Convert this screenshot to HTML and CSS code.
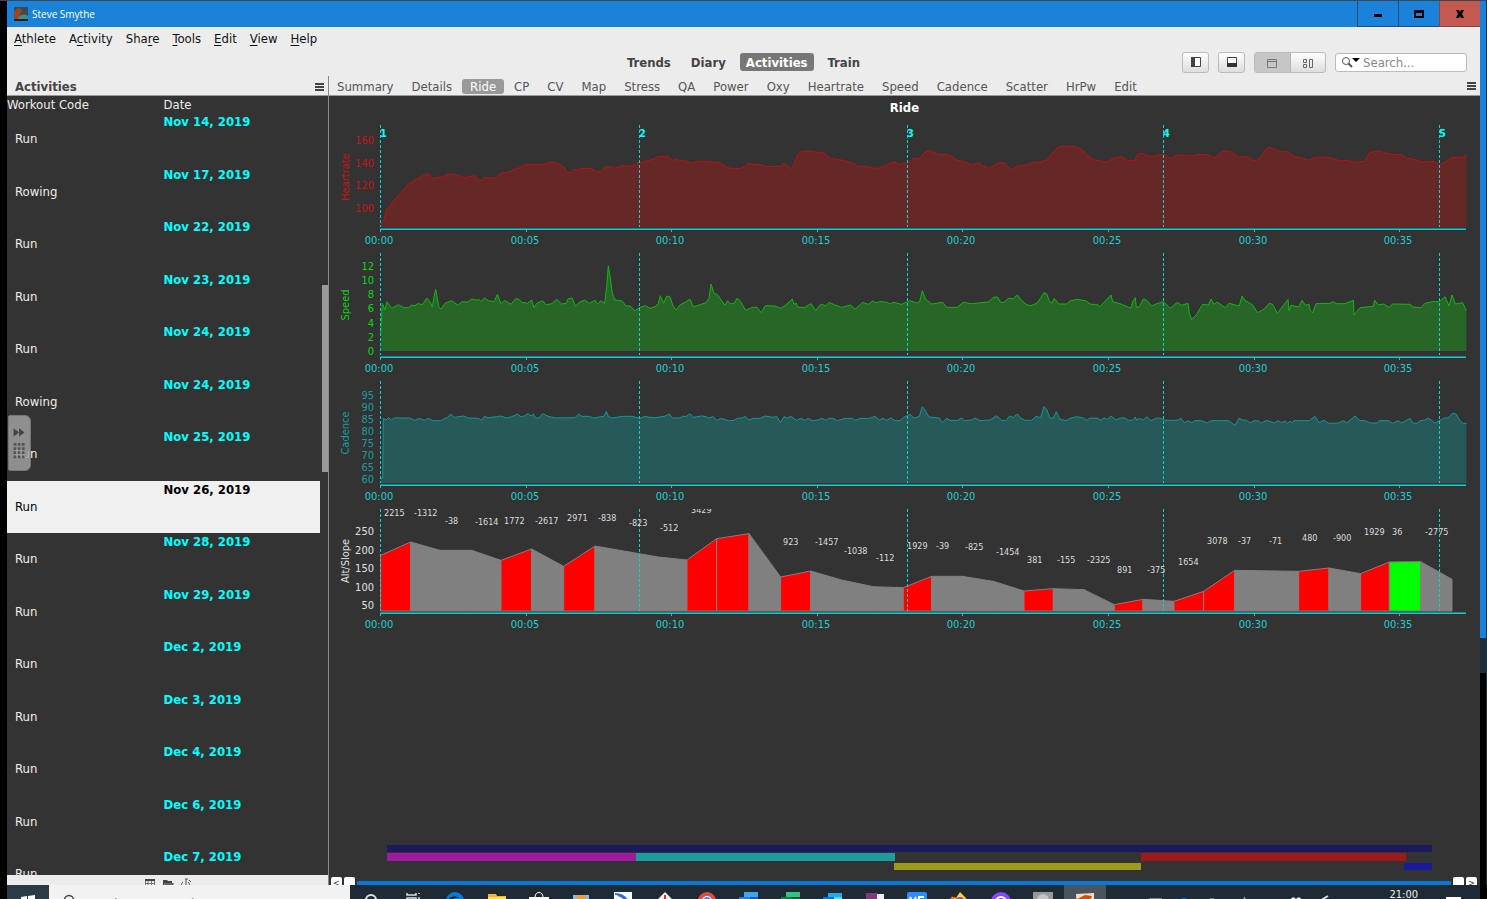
FILE: index.html
```html
<!DOCTYPE html>
<html lang="en">
<head>
<meta charset="utf-8">
<title>Steve Smythe</title>
<link rel="stylesheet" href="styles.css">
</head>
<body>
<div class="screen">
  <div class="desktop">
    <div class="window">
      <header class="titlebar">
        <svg class="app-icon" viewBox="0 0 14 14"><rect width="14" height="14" rx="1" fill="#3b4a4f"/><path d="M0 14V4L5 1l3 2-2 5-2 6z" fill="#a4441c"/><path d="M5 10c3-3 6-3 9-1v3H4z" fill="#3f8f8c"/><path d="M0 12h14v2H0z" fill="#222"/></svg>
        <h1 class="window-title">Steve Smythe</h1>
        <div class="window-controls">
          <button class="win-btn" aria-label="Minimize"><svg viewBox="0 0 12 10"><path d="M2 5h8v3H2z"/></svg></button>
          <button class="win-btn" aria-label="Maximize"><svg viewBox="0 0 12 10"><path fill-rule="evenodd" d="M1 1h10v8H1zM3 4v3h6V4z"/></svg></button>
          <button class="win-btn close" aria-label="Close"><svg viewBox="0 0 12 10"><path d="M2 1h3l1 2 1-2h3L8 5l2 4H7L6 7 5 9H2l2-4z"/></svg></button>
        </div>
      </header>
      <nav class="menubar" aria-label="Menu">
        <button><u>A</u>thlete</button><button>A<u>c</u>tivity</button><button>Sha<u>r</u>e</button><button><u>T</u>ools</button><button><u>E</u>dit</button><button><u>V</u>iew</button><button><u>H</u>elp</button>
      </nav>
      <div class="toolbar">
        <nav class="views" aria-label="Views">
          <button>Trends</button><button>Diary</button><button class="on">Activities</button><button>Train</button>
        </nav>
        <div class="tools">
          <button class="tool" aria-label="Toggle sidebar"><svg viewBox="0 0 12 12"><path d="M1.500 1.500h9v9h-9z" fill="#fff" stroke="#444"/><path d="M1 1h4v10H1z" fill="#444"/></svg></button>
          <button class="tool" aria-label="Toggle bottom panel"><svg viewBox="0 0 12 12"><path d="M1.500 1.500h9v9h-9z" fill="#fff" stroke="#444"/><path d="M1 7h10v4H1z" fill="#333"/></svg></button>
          <div class="segmented">
            <button class="on" aria-label="Tabbed view"><svg viewBox="0 0 12 12"><path d="M1.500 2.500h9v8h-9zM1 4.500h10" fill="none" stroke="#777"/></svg></button>
            <button aria-label="Tiled view"><svg viewBox="0 0 12 12"><path d="M1.500 2.500h3v3h-3zM1.500 7.500h3v3h-3zM7.500 2.500h3v8h-3z" fill="none" stroke="#666"/></svg></button>
          </div>
          <label class="search"><svg viewBox="0 0 20 12"><circle cx="5" cy="5" r="3.500" fill="none" stroke="#555"/><path d="M7.500 7.500 11 11" stroke="#555" stroke-width="2"/><path d="M11 2h8l-4 4z" fill="#000"/></svg><input type="text" placeholder="Search..." aria-label="Search"></label>
        </div>
      </div>
      <div class="split">
        <aside class="sidebar">
          <div class="side-head"><h2>Activities</h2><button class="burger" aria-label="Sidebar menu"></button></div>
          <div class="list">
            <table class="activities">
              <thead><tr><th>Workout Code</th><th>Date</th></tr></thead>
              <tbody>
                <tr><td>Run</td><td>Nov 14, 2019</td></tr>
                <tr><td>Rowing</td><td>Nov 17, 2019</td></tr>
                <tr><td>Run</td><td>Nov 22, 2019</td></tr>
                <tr><td>Run</td><td>Nov 23, 2019</td></tr>
                <tr><td>Run</td><td>Nov 24, 2019</td></tr>
                <tr><td>Rowing</td><td>Nov 24, 2019</td></tr>
                <tr><td>Run</td><td>Nov 25, 2019</td></tr>
                <tr class="selected"><td>Run</td><td>Nov 26, 2019</td></tr>
                <tr><td>Run</td><td>Nov 28, 2019</td></tr>
                <tr><td>Run</td><td>Nov 29, 2019</td></tr>
                <tr><td>Run</td><td>Dec 2, 2019</td></tr>
                <tr><td>Run</td><td>Dec 3, 2019</td></tr>
                <tr><td>Run</td><td>Dec 4, 2019</td></tr>
                <tr><td>Run</td><td>Dec 6, 2019</td></tr>
                <tr><td>Run</td><td>Dec 7, 2019</td></tr>
              </tbody>
            </table>
            <div class="scroll-thumb"></div>
            <button class="drawer" aria-label="Open drawer"><svg viewBox="0 0 24 56"><path d="M5 12l6 4.500L5 21zM11 12l6 4.500-6 4.500z" fill="#444"/><g fill="#555"><path d="M5 28h3v3H5zM9.500 28h3v3h-3zM14 28h3v3h-3zM5 32.500h3v3H5zM9.500 32.500h3v3h-3zM14 32.500h3v3h-3zM5 37h3v3H5zM9.500 37h3v3h-3zM14 37h3v3h-3zM5 41.500h3v3H5zM9.500 41.500h3v3h-3zM14 41.500h3v3h-3z"/></g></svg></button>
          </div>
          <div class="side-foot">
            <button aria-label="Calendar"><svg viewBox="0 0 12 12"><path d="M1 1h10v2H1z" fill="#444"/><path d="M1.500 3v8h9V3M1 5.500h10M1 8h10M4 3v8M7.500 3v8" fill="none" stroke="#777"/></svg></button>
            <button aria-label="Folder"><svg viewBox="0 0 12 12"><path d="M1 2h4l1 1h4v2H3L1 9z" fill="#444"/><path d="M3 5h9l-2 6H1z" fill="#666"/></svg></button>
            <button aria-label="Intervals"><svg viewBox="0 0 12 12"><path d="M3 4a4 4 0 1 0 5 0M5 1h3M6 1v6M9 2l2 2" fill="none" stroke="#555"/></svg></button>
          </div>
        </aside>
        <main class="main">
          <div class="tabs-row">
            <nav class="tabs" aria-label="Charts">
              <button>Summary</button><button>Details</button><button class="on">Ride</button><button>CP</button><button>CV</button><button>Map</button><button>Stress</button><button>QA</button><button>Power</button><button>Oxy</button><button>Heartrate</button><button>Speed</button><button>Cadence</button><button>Scatter</button><button>HrPw</button><button>Edit</button>
            </nav>
            <button class="burger" aria-label="Chart menu"></button>
          </div>
          <section class="charts">
            <h2>Ride</h2>
            <svg class="chart" id="heartrate" viewBox="0 0 1151 128"></svg>
            <svg class="chart" id="speed" viewBox="0 0 1151 128"></svg>
            <svg class="chart" id="cadence" viewBox="0 0 1151 128"></svg>
            <svg class="chart" id="altitude" viewBox="0 0 1151 128"></svg>
            <svg class="intervals" viewBox="0 0 1151 28">
              <rect x="58" y="0" width="1045" height="7" fill="#1a1a5c"/>
              <rect x="58" y="8" width="250" height="8" fill="#a01a9e"/>
              <rect x="307" y="8" width="259" height="8" fill="#1c9c9a"/>
              <rect x="812" y="8" width="265" height="8" fill="#9c1a1a"/>
              <rect x="565" y="18" width="247" height="7" fill="#9c9a1a"/>
              <rect x="1075" y="18" width="28" height="7" fill="#1a1a9c"/>
            </svg>
            <div class="span-slider">
              <button aria-label="Scroll left">&lt;</button><button aria-label="Span start"></button><div class="span-line"></div><button aria-label="Span end"></button><button aria-label="Scroll right">&gt;</button>
            </div>
          </section>
        </main>
      </div>
    </div>
    <div class="edge"><div class="edge-blue"></div><div class="edge-teal"></div></div>
  </div>
  <footer class="taskbar">
    <button class="start" aria-label="Start"><svg viewBox="0 0 16 16"><path d="M1 3l6-1v6H1zM8 2l7-1v7H8zM1 9h6v6l-6-1zM8 9h7v7l-7-1z" fill="#fff"/></svg></button>
    <label class="task-search"><svg viewBox="0 0 14 14"><circle cx="7" cy="6" r="4.500" fill="none" stroke="#444" stroke-width="1.500"/></svg><input type="text" placeholder="Type here to search" aria-label="Type here to search"></label>
    <div class="apps">
      <button aria-label="Cortana"><svg viewBox="0 0 20 16"><circle cx="10" cy="8" r="5" fill="none" stroke="#ddd" stroke-width="2"/></svg></button>
      <button aria-label="Task view"><svg viewBox="0 0 20 16"><path d="M4 1v2h9V1M4 6h9v8H4zM16 1v1M16 5v8" fill="none" stroke="#ddd" stroke-width="1.500"/></svg></button>
      <button aria-label="Edge"><svg viewBox="0 0 20 16"><path d="M1 9a9 9 0 0 1 18 0v1H7c0-5 7-5 8-3-3-4-10-4-12 2z" fill="#0a78d6"/></svg></button>
      <button aria-label="Files"><svg viewBox="0 0 20 16"><path d="M1 2h8l1 2h9v12H1z" fill="#f4b92a"/><path d="M1 5h18v11H1z" fill="#ffd969"/></svg></button>
      <button aria-label="Store"><svg viewBox="0 0 20 16"><path d="M0 5h20v11H0z" fill="#fff"/><path d="M6 5c0-6 8-6 8 0" fill="none" stroke="#fff"/></svg></button>
      <button aria-label="Photos"><svg viewBox="0 0 20 16"><path d="M2 3h16v13H2z" fill="#8db9d4"/><circle cx="10" cy="8" r="5" fill="#f29a38"/></svg></button>
      <button aria-label="Editor"><svg viewBox="0 0 20 16"><path d="M1 0h18v16H1z" fill="#f4f8ff"/><path d="M2 2q8 0 12 6M5 3q7 2 9 8" stroke="#3566d8" stroke-width="2" fill="none"/></svg></button>
      <button aria-label="Garmin"><svg viewBox="0 0 20 16"><path d="M10 0l9 9-9 9-9-9z" fill="#eee"/><path d="M9 3h2v6H9z" fill="#c33"/></svg></button>
      <button aria-label="Chrome"><svg viewBox="0 0 20 16"><circle cx="10" cy="9" r="9" fill="#dc4e41"/><circle cx="10" cy="9" r="5" fill="#fff"/><circle cx="10" cy="9" r="4" fill="#4285f4"/></svg></button>
      <button aria-label="Word"><svg viewBox="0 0 20 16"><path d="M5 0h14v5H5z" fill="#41a5ee"/><path d="M5 5h14v11H5z" fill="#185abd"/><path d="M0 5h11v11H0z" fill="#2b7cd3"/></svg></button>
      <button aria-label="Excel"><svg viewBox="0 0 20 16"><path d="M5 0h14v5H5z" fill="#33c481"/><path d="M5 5h14v11H5z" fill="#185c37"/><path d="M0 5h11v11H0z" fill="#107c41"/></svg></button>
      <button aria-label="Outlook"><svg viewBox="0 0 20 16"><path d="M5 1h14v5H5z" fill="#28a8ea"/><path d="M5 5h14v11H5z" fill="#50d9ff"/><path d="M0 5h11v11H0z" fill="#0078d4"/></svg></button>
      <button aria-label="OneNote"><svg viewBox="0 0 20 16"><path d="M9 2h10v14H9z" fill="#eee"/><path d="M1 1h11v15H1z" fill="#80397b"/></svg></button>
      <button aria-label="VSDC"><svg viewBox="0 0 20 16"><rect width="20" height="20" rx="2" fill="#2a8cff"/><path d="M3 5l3 6 3-6M17 5h-5v4h5" fill="none" stroke="#fff" stroke-width="2"/></svg></button>
      <button aria-label="Firefox"><svg viewBox="0 0 20 16"><path d="M1 7l3-2 3 1 4-6 5 5 3 4v8H1z" fill="#ffcf33"/><path d="M1 8l2-4 3 3 4-1v10H1z" fill="#f36b21"/><circle cx="11" cy="10" r="5" fill="#8c45d0"/></svg></button>
      <button aria-label="Podcasts"><svg viewBox="0 0 20 16"><circle cx="10" cy="10" r="10" fill="#8746ff"/><circle cx="10" cy="10" r="5" fill="none" stroke="#fff" stroke-width="2"/></svg></button>
      <button aria-label="Disc"><svg viewBox="0 0 20 16"><path d="M0 0h20v16H0z" fill="#999"/><circle cx="10" cy="8" r="6" fill="#c4c4c4"/></svg></button>
      <button class="on" aria-label="GoldenCheetah"><svg viewBox="0 0 20 16"><path d="M1 2l18-1v15H2z" fill="#f3dcc4"/><path d="M2 7l8-4 7 1-4 9H3z" fill="#c4521a"/></svg></button>
    </div>
    <div class="tray">
      <svg viewBox="0 0 16 16"><path d="M1 5h13v9H1zM4 7v7" fill="none" stroke="#ddd"/></svg>
      <svg viewBox="0 0 16 16"><circle cx="8" cy="9" r="5" fill="#0a78d6"/></svg>
      <svg viewBox="0 0 16 16"><circle cx="8" cy="9" r="5" fill="#7d878c"/></svg>
      <svg viewBox="0 0 16 16"><path d="M2 6h3v6H2zM9 5q3 3 0 8M12 3q4 5 0 10" fill="none" stroke="#ddd"/></svg>
      <svg viewBox="0 0 16 16"><circle cx="8" cy="9" r="4" fill="#ccc"/></svg>
      <svg viewBox="0 0 16 16"><path d="M2 6q3-5 6-1 3-4 6 1l-6 8z" fill="#eee"/></svg>
      <svg viewBox="0 0 16 16"><path d="M7 14V5l5-3" fill="none" stroke="#ddd" stroke-width="2"/></svg>
      <span class="lang">ENG</span>
      <time>21:00</time>
      <svg viewBox="0 0 16 16"><path d="M1 4h13v12H1z" fill="none" stroke="#fff" stroke-width="2"/></svg>
    </div>
  </footer>
</div>
<script src="charts.js"></script>
</body>
</html>
```
FILE: styles.css
```css
* { box-sizing: border-box; }
body {
  margin: 0;
  background: #000;
  font-family: "DejaVu Sans Condensed", "Noto Sans", sans-serif;
  font-size: 13px;
}
button {
  border: 0;
  padding: 0;
  margin: 0;
  background: none;
  font: inherit;
  color: inherit;
}
input { border: 0; padding: 0; background: none; font: inherit; min-width: 0; }
h1, h2 { margin: 0; font-size: 13px; }
.screen {
  height: 100vh;
  display: flex;
  flex-direction: column;
  overflow: hidden;
  padding-left: 7px;
  border-top: 1px solid #3c4650;
}
.desktop { flex: 1; min-height: 0; display: flex; }
.window { flex: 1; min-width: 0; display: flex; flex-direction: column; background: #ececec; }
.edge { width: 7px; display: flex; flex-direction: column; border-right: 1px solid #26303a; }
.edge-blue { flex: 637; background: #1a82d8; }
.edge-teal { flex: 35; background: #1d3039; margin-bottom: 212px; }

.titlebar { height: 26px; display: flex; align-items: center; gap: 4px; padding-left: 7px; background: #1a82d8; }
.app-icon { width: 14px; height: 14px; }
.window-title { flex: 1; color: #fff; font: 10px "Open Sans", "Noto Sans", sans-serif; }
.window-controls { display: flex; align-self: stretch; }
.win-btn {
  width: 41px;
  display: flex;
  align-items: center;
  justify-content: center;
  border: solid #24506f;
  border-width: 0 0 1px 1px;
}
.win-btn svg { width: 12px; height: 10px; }
.close { background: #c4594f; border-color: #7c4a4c; }

.menubar { height: 23px; display: flex; align-items: center; gap: 13px; padding-left: 7px; color: #111; }
.menubar u { text-underline-offset: 2px; }

.toolbar { height: 26px; display: grid; grid-template-columns: 1fr auto 1fr; align-items: center; padding-bottom: 2px; }
.views { grid-column: 2; display: flex; gap: 8px; font-weight: bold; color: #444; }
.views button { padding: 0 6px; height: 18px; border-radius: 3px; }
.views .on { background: #777; color: #fff; }
.tools { display: flex; justify-content: flex-end; align-items: center; gap: 9px; padding-right: 13px; }
.tool, .segmented {
  height: 21px;
  border: 1px solid #bbb;
  border-radius: 3px;
  background: linear-gradient(#fdfdfd, #dedede);
}
.tool { width: 27px; display: flex; align-items: center; justify-content: center; }
.tools .tool svg, .segmented svg { width: 12px; height: 12px; }
.segmented { display: flex; width: 72px; }
.segmented button { flex: 1; display: flex; align-items: center; justify-content: center; padding-top: 2px; }
.segmented .on { background: #c6c6c6; border-right: 1px solid #b4b4b4; }
.search {
  width: 132px;
  height: 19px;
  display: flex;
  align-items: center;
  padding-left: 5px;
  gap: 2px;
  background: #fff;
  border: 1px solid #bbb;
  border-radius: 3px;
}
.search svg { width: 20px; height: 12px; flex: none; }
.search input { flex: 1; }
.search input::placeholder { color: #888; opacity: 1; }

.split { flex: 1; min-height: 0; display: flex; }
.sidebar { width: 322px; display: flex; flex-direction: column; border-right: 1px solid #888; }
.side-head, .tabs-row {
  height: 20px;
  flex: none;
  display: flex;
  align-items: center;
  justify-content: space-between;
  border-bottom: 1px solid #999;
}
.side-head { padding: 2px 4px 0 8px; }
.side-head h2 { color: #444; }
.burger { width: 9px; height: 8px; border: solid #444; border-width: 2px 0; background: linear-gradient(#444, #444) 0 1px / 100% 2px no-repeat; }
.list { flex: 1; min-height: 0; position: relative; overflow: hidden; background: #333; }
.activities { width: 313px; border-collapse: collapse; table-layout: fixed; color: #eee; }
.activities th { height: 17px; padding: 0; text-align: left; font-weight: normal; line-height: 17px; }
.activities td { height: 53px; padding: 0; vertical-align: top; line-height: 17px; color: #0ff; font-weight: bold; }
.activities tr:nth-child(even) td { height: 52px; }
.activities td:first-child { padding: 17px 0 0 8px; font-weight: normal; color: #eee; }
.activities .selected { background: #f0f0f0; }
.activities .selected td, .activities .selected td:first-child { color: #000; }
.scroll-thumb { position: absolute; right: 0; top: 189px; width: 6px; height: 187px; background: #999; }
.drawer {
  position: absolute;
  left: 1px;
  top: 319px;
  width: 23px;
  height: 56px;
  border: 1px solid #777;
  border-radius: 2px 6px 6px 2px;
  background: rgba(160, 160, 160, .85);
}
.drawer svg { width: 22px; height: 54px; display: block; }
.side-foot { height: 10px; flex: none; display: flex; align-items: flex-start; gap: 6px; justify-content: center; overflow: hidden; padding-top: 3px; }
.side-foot svg { width: 12px; height: 12px; display: block; }

.main { flex: 1; min-width: 0; display: flex; flex-direction: column; }
.tabs-row { padding: 1px 4px 0 0; }
.tabs { display: flex; gap: 2px; color: #555; }
.tabs button { padding: 0 8px; height: 15px; line-height: 15px; border-radius: 3px; }
.tabs .on { background: #999; color: #fff; }
.charts { flex: 1; min-height: 0; display: flex; flex-direction: column; background: #333; }
.charts h2 { height: 24px; line-height: 24px; text-align: center; color: #fff; }
.chart { display: block; width: 100%; }
.chart text { font-size: 11px; }
.chart .slope { font-size: 9px; fill: #ddd; }
.chart .lap { font-weight: bold; fill: #0ff; }
.chart .time { fill: #1cd0d0; text-anchor: middle; }
.chart .tick { text-anchor: end; }
.chart .name { text-anchor: middle; }
.intervals { display: block; width: 100%; margin-top: auto; }
.span-slider { height: 12px; flex: none; display: flex; align-items: flex-end; gap: 2px; padding: 0 3px 0 2px; overflow: hidden; }
.span-slider button { width: 11px; height: 8px; overflow: hidden; border-radius: 2px 2px 0 0; background: #fff; color: #333; font-size: 9px; line-height: 12px; }
.span-line { flex: 1; height: 4px; background: #0a78d6; }

.taskbar { height: 14px; flex: none; display: flex; align-items: flex-start; overflow: hidden; background: #1f2b34; margin-right: 7px; }
.start { width: 42px; padding: 9px 0 0 13px; background: #2b3b45; }
.start svg { width: 16px; height: 16px; display: block; }
.task-search { width: 301px; height: 40px; display: flex; gap: 8px; align-items: flex-start; padding: 9px 0 0 13px; background: #f2f2f2; }
.task-search svg { width: 14px; height: 14px; }
.task-search input { flex: 1; padding-top: 2px; }
.apps { display: flex; }
.apps button { width: 42px; height: 40px; display: flex; align-items: flex-start; justify-content: center; padding-top: 7px; }
.apps svg { width: 20px; height: 16px; display: block; }
.apps .on { background: #4a545c; }
.tray { margin-left: auto; display: flex; gap: 12px; padding: 9px 18px 0 0; color: #eee; font-size: 11px; line-height: 20px; }
.tray svg { width: 16px; height: 16px; }
.tray time { line-height: 11px; margin-top: -5px; padding: 0 16px 0 12px; }
.tray .lang { height: 20px; }
```
FILE: charts.js
```js
// Samples are x,y pairs in thirds of a pixel, grouped in three runs,
// each with its own x origin.
const ORIGINS = [3, 1203, 2313];
const TIMES = ['00:00', '00:05', '00:10', '00:15', '00:20', '00:25', '00:30', '00:35'];
const LAPS = [51, 310, 578, 834, 1110];

const heart = [
  '152,312 160,305 170,268 180,260 190,243 210,220 235,192 265,174 290,162 297,162 308,175 340,170 355,162 375,163 388,168 405,173 435,167 445,180 455,182 463,171 475,174 495,174 512,160 535,157 548,149 570,143 583,134 640,134 655,126 680,128 702,142 712,157 722,157 735,148 745,150 755,145 785,146 800,156 812,155 825,140 840,140 855,145 870,139 885,137 908,139 918,128 940,126 970,118 985,109 1015,109 1030,122 1040,117 1050,122 1070,123 1085,130 1105,123 1170,128 1185,139',
  '0,145 30,146 42,141 56,129 70,133 92,134 105,140 150,139 162,130 172,137 184,148 195,125 205,102 212,96 235,92 268,99 280,96 293,109 305,116 325,118 365,128 385,140 415,140 430,145 450,144 470,134 488,126 500,129 508,133 520,129 535,129 550,116 570,115 582,99 595,92 625,102 658,105 680,120 695,123 725,134 745,129 760,138 778,144 790,138 805,129 825,129 840,147 850,148 862,138 882,137 905,128 932,125 950,121 965,101 988,79 1035,79 1058,91 1078,111 1098,121',
  '0,121 12,127 25,124 40,114 68,111 82,123 105,121 110,107 120,100 130,101 140,108 155,109 168,109 178,103 192,103 212,116 232,105 255,107 265,105 275,109 290,104 325,104 335,112 347,112 358,100 372,92 392,95 415,111 445,111 458,121 472,121 485,107 500,85 510,82 540,95 565,96 582,110 600,112 628,121 645,112 660,111 698,114 718,123 740,121 765,127 790,124 800,116 808,98 835,93 850,98 880,103 905,104 920,115 940,117 965,126 1000,124 1018,134 1035,127 1055,113 1075,112 1090,112 1099,102'
];
const speed = [
  '152,640 157,550 165,570 171,545 185,565 205,554 222,563 235,563 245,555 255,557 265,550 277,555 290,534 300,545 307,560 317,508 327,563 333,567 345,550 365,542 384,556 395,545 412,546 427,537 440,541 447,538 453,545 463,534 475,542 492,545 502,523 513,551 523,541 543,553 557,536 567,538 575,547 592,550 605,540 612,563 620,550 638,542 648,555 665,551 680,538 695,552 708,550 715,536 727,534 736,559 748,547 764,540 778,550 795,541 803,553 812,542 824,550 830,500 835,437 841,475 847,520 855,540 877,543 887,558 900,558 915,572 930,562 947,557 960,565 978,559 985,550 991,527 1001,550 1010,528 1020,531 1028,555 1038,570 1050,555 1080,538 1090,560 1108,555 1128,548 1137,535 1143,492 1152,520 1162,524 1185,556 1193,542',
  '0,551 12,551 22,534 32,545 47,571 65,563 80,561 94,578 106,557 135,558 152,565 165,557 187,537 192,553 198,549 204,562 225,562 243,551 257,572 272,553 288,557 297,547 315,555 335,562 362,555 375,568 398,547 415,553 428,543 438,549 450,545 472,547 480,552 492,547 515,553 540,542 560,549 569,545 577,512 587,538 605,552 638,547 650,562 682,562 700,547 725,551 775,546 790,532 803,531 812,547 822,547 835,535 850,536 862,525 873,540 890,554 903,557 922,549 942,518 950,521 958,544 966,549 972,535 987,552 1010,552 1020,543 1040,538 1070,543 1080,552 1105,555',
  '0,560 33,525 38,545 60,551 93,565 98,545 106,533 109,562 118,560 130,537 140,541 155,558 170,551 190,545 210,565 232,547 245,556 264,550 268,580 275,599 290,583 308,553 325,555 333,537 342,553 352,546 375,563 387,550 418,558 426,528 435,541 458,555 472,578 492,568 508,550 518,553 532,580 564,538 567,572 573,556 596,561 606,541 616,556 627,553 631,572 638,579 648,551 690,550 698,545 710,551 735,551 760,541 762,585 780,563 820,559 824,541 835,555 850,552 867,562 878,552 930,553 940,561 962,563 975,550 998,545 1018,545 1035,530 1047,558 1056,525 1066,552 1088,548 1099,572'
];
const cadence = [
  '152,326 158,325 160,145 168,150 175,143 184,150 193,144 240,144 253,151 268,145 283,151 295,145 308,152 332,152 345,145 352,143 362,132 373,142 400,138 415,144 445,145 455,151 463,139 475,143 500,140 512,138 530,144 545,140 563,132 572,140 583,138 594,131 603,138 610,132 617,144 627,144 638,131 655,139 675,144 735,143 746,132 756,139 778,139 790,144 822,139 829,124 835,139 845,144 880,139 905,139 930,145 945,139 960,142 975,143 1003,139 1018,132 1028,144 1050,144 1058,139 1070,139 1080,131 1090,142 1115,138 1128,140 1135,144 1150,140 1160,151 1175,145 1195,152',
  '0,152 12,151 22,145 38,144 45,139 57,150 70,145 90,145 105,138 130,142 140,139 151,158 162,140 172,144 182,139 200,151 212,145 225,151 235,145 247,152 263,150 275,145 288,151 295,145 310,145 322,152 345,145 367,145 377,151 390,145 418,145 435,139 448,150 460,145 470,151 482,144 495,152 510,152 520,143 540,133 552,144 568,139 577,110 585,120 597,141 628,144 637,158 650,145 660,151 683,151 695,144 703,152 725,150 735,144 750,152 780,150 800,137 815,151 828,151 838,139 850,142 862,132 872,144 885,151 905,151 918,139 932,143 942,110 950,118 960,144 970,144 979,125 990,148 1008,152 1020,145 1040,140 1060,144 1070,151 1080,144 1105,145',
  '0,151 12,144 22,148 33,138 48,150 60,144 75,144 85,151 97,151 106,141 110,151 118,145 130,150 140,140 153,152 170,144 182,145 195,151 232,151 243,145 253,158 265,152 275,158 285,152 305,152 320,159 335,152 385,152 405,166 417,145 428,150 440,151 450,159 465,151 475,153 485,159 500,151 523,159 533,152 545,158 555,153 563,160 570,153 575,158 582,152 628,152 645,139 657,158 672,151 687,160 715,159 730,152 740,159 765,138 780,152 795,152 810,159 832,159 838,152 865,152 878,160 895,152 905,159 930,145 938,159 950,160 962,152 973,151 985,144 1005,159 1033,144 1045,144 1057,130 1068,132 1082,155 1090,160 1099,160'
];
const altitude = [
  '152,556 242,516 330,541 425,541 513,571 605,537 701,589 795,528 985,561 1071,570 1160,506',
  '57,491 152,621 242,603 335,630 430,650 520,653 605,619 697,619 790,634 882,663 970,656 1062,659',
  '43,704 129,688 222,694 311,664 404,601 596,604 687,594 782,611 868,576 962,575 1056,628'
];
// One letter per altitude segment: r climb, g gentle climb, n other.
const GRADES = 'rnnnrnrnnrrnrnnnrnnnrnnrnrrnrnrgn';
const SLOPES = [
  ['2215', 55, 12], ['-1312', 85, 12], ['-38', 116, 20], ['-1614', 146, 21], ['1772', 175, 20],
  ['-2617', 206, 20], ['2971', 238, 17], ['-838', 269, 17], ['-823', 300, 22], ['-512', 331, 27],
  ['3429', 362, 9], ['923', 454, 41], ['-1457', 486, 41], ['-1038', 515, 50], ['-112', 547, 57],
  ['1929', 578, 45], ['-39', 607, 45], ['-825', 636, 46], ['-1454', 667, 51], ['381', 698, 59],
  ['-155', 728, 59], ['-2325', 758, 59], ['891', 788, 69], ['-375', 818, 69], ['1654', 849, 61],
  ['3078', 878, 40], ['-37', 909, 40], ['-71', 940, 40], ['480', 973, 37], ['-900', 1004, 37],
  ['1929', 1035, 31], ['36', 1063, 31], ['-2775', 1096, 31]
];

function points(runs, dy) {
  return runs.flatMap((run, i) => run.split(' ').map(p => {
    const [x, y] = p.split(',').map(Number);
    return [(x + ORIGINS[i]) / 3, (y + dy) / 3];
  }));
}
function area(pts, base, fill, stroke) {
  const line = pts.map(p => p.join()).join(' ');
  const end = pts[pts.length - 1][0];
  return `<polygon points="${pts[0][0]},${base} ${line} ${end},${base}" fill="${fill}"/>` +
    `<polyline points="${line}" fill="none" stroke="${stroke}"/>`;
}
function frame(name, color, ticks) {
  const laps = LAPS.map(x => `<path d="M${x}.5 5V107" fill="none" stroke="#00d8d8" stroke-dasharray="3 2"/>`).join('');
  const times = TIMES.map((t, i) => {
    const x = Math.round(51 + i * 145.6);
    return `<path d="M${x}.5 109v3" stroke="#1cc6c6"/><text class="time" x="${x - 1}" y="124">${t}</text>`;
  }).join('');
  const marks = ticks.map(([t, y]) => `<text class="tick" x="45" y="${y + 4}" fill="${color}">${t}</text>`).join('');
  return laps + '<path d="M51 108.500H1137" stroke="#158a8c"/><path d="M51 109.500H1137" stroke="#1cc6c6"/>' + times + marks +
    `<text class="name" transform="translate(20 57) rotate(-90)" fill="${color}">${name}</text>`;
}
function draw(id, body) { document.getElementById(id).innerHTML = body; }

draw('heartrate', area(points(heart, 0), 107, '#662727', '#b51414') +
  frame('Heartrate', '#c81414', [['160', 20], ['140', 43], ['120', 65], ['100', 88]]) +
  LAPS.map((x, i) => `<text class="lap" x="${x}" y="17">${i + 1}</text>`).join(''));
draw('speed', area(points(speed, -384), 103, '#276627', '#14b414') +
  frame('Speed', '#14d214', [['12', 18], ['10', 32], ['8', 46], ['6', 60], ['4', 75], ['2', 89], ['0', 103]]));
draw('cadence', area(points(cadence, -18), 107, '#275959', '#149696') +
  frame('Cadence', '#149e9e', [['95', 19], ['90', 31], ['85', 43], ['80', 55], ['75', 67], ['70', 79], ['65', 91], ['60', 103]]));

const alt = points(altitude, -402);
const fills = { r: '#f00', g: '#0f0', n: '#808080' };
draw('altitude', alt.slice(1).map(([x, y], i) => {
  const [px, py] = alt[i];
  return `<polygon points="${px},107 ${px},${py} ${x},${y} ${x},107" fill="${fills[GRADES[i]]}" stroke="#808080"/>`;
}).join('') + frame('Alt/Slope', '#e0e0e0', [['250', 27], ['200', 46], ['150', 64], ['100', 83], ['50', 101]]) +
  '<clipPath id="plot"><path d="M0 5H1151V107H0z"/></clipPath><g clip-path="url(#plot)">' +
  SLOPES.map(([t, x, y]) => `<text class="slope" x="${x}" y="${y}">${t}</text>`).join('') + '</g>');
```
